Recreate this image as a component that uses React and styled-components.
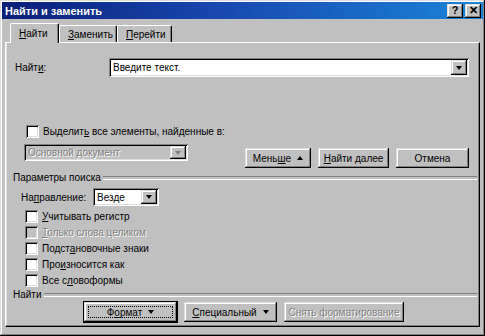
import React from 'react';
import styled, { createGlobalStyle, css } from 'styled-components';

const Global = createGlobalStyle`
  html, body { margin: 0; padding: 0; background: #c0c0c0; }
  body {
    font-family: "Liberation Sans", Arial, sans-serif;
    font-size: 10px;
    color: #000;
    white-space: nowrap;
  }
  * { box-sizing: border-box; }
`;

const raised = css`
  box-shadow: inset -1px -1px #000, inset 1px 1px #dfdfdf,
    inset -2px -2px #808080, inset 2px 2px #fff;
`;

const sunken = css`
  box-shadow: inset 1px 1px #808080, inset -1px -1px #fff,
    inset 2px 2px #000, inset -2px -2px #dfdfdf;
`;

const Window = styled.div`
  width: 485px;
  height: 336px;
  padding: 2px;
  background: #c0c0c0;
  display: flex;
  flex-direction: column;
  ${raised}
`;

const TitleBar = styled.div`
  height: 18px;
  display: flex;
  align-items: center;
  padding-left: 3px;
  background: linear-gradient(90deg, #0a1f78 0%, #1848b0 45%, #1a84d8 100%);
`;

const Title = styled.div`
  flex: 1;
  color: #fff;
  font-weight: bold;
  font-size: 11px;
`;

const TitleButton = styled.div`
  width: 16px;
  height: 14px;
  margin-right: ${p => p.$gap}px;
  background: #c0c0c0;
  display: flex;
  align-items: center;
  justify-content: center;
  font-weight: bold;
  font-size: 11px;
  line-height: 1;
  ${raised}
`;

const Body = styled.div`
  flex: 1;
  display: flex;
  flex-direction: column;
  padding: 4px 3px 7px 3px;
`;

const TabRow = styled.div`
  height: 19px;
  display: flex;
  align-items: flex-end;
  padding-left: 5px;
`;

const Tab = styled.div`
  position: relative;
  width: ${p => p.$w}px;
  height: ${p => (p.$active ? 20 : 17)}px;
  margin-bottom: ${p => (p.$active ? -1 : 0)}px;
  z-index: ${p => (p.$active ? 2 : 1)};
  padding-left: 8px;
  display: flex;
  align-items: center;
  background: #c0c0c0;
  border-top: 1px solid #fff;
  border-left: 1px solid #fff;
  border-right: 1px solid #000;
  border-top-left-radius: 2px;
  border-top-right-radius: 2px;
  box-shadow: inset -1px 0 #808080;
`;

const Panel = styled.div`
  flex: 1;
  display: flex;
  flex-direction: column;
  padding: 15px 10px 4px 7px;
  border-top: 1px solid #fff;
  border-left: 1px solid #fff;
  border-right: 1px solid #000;
  border-bottom: 1px solid #000;
  box-shadow: inset -1px -1px #808080, inset 1px 0 #dfdfdf;
`;

const FindRow = styled.div`
  display: flex;
  align-items: center;
  height: 19px;
`;

const Label = styled.span`
  width: ${p => p.$w}px;
  margin-left: ${p => p.$ml || 0}px;
  flex-shrink: 0;
`;

const Combo = styled.div`
  position: relative;
  flex: ${p => (p.$w ? 'none' : 1)};
  width: ${p => (p.$w ? `${p.$w}px` : 'auto')};
  height: ${p => p.$h}px;
  display: flex;
  align-items: center;
  padding: 0 2px 0 4px;
  background: ${p => (p.$disabled ? '#c0c0c0' : '#fff')};
  ${sunken}
`;

const ComboText = styled.span`
  flex: 1;
  color: ${p => (p.$disabled ? '#808080' : '#000')};
  text-shadow: ${p => (p.$disabled ? '1px 1px #fff' : 'none')};
`;

const ArrowButton = styled.div`
  width: 16px;
  height: ${p => p.$h}px;
  background: #c0c0c0;
  display: flex;
  align-items: center;
  justify-content: center;
  ${raised}
`;

const Triangle = styled.span`
  width: 0;
  height: 0;
  border-left: 3.5px solid transparent;
  border-right: 3.5px solid transparent;
  ${p =>
    p.$up
      ? css`border-bottom: 4px solid ${p.$color || '#000'};`
      : css`border-top: 4px solid ${p.$color || '#000'};`}
  margin-left: ${p => p.$ml || 0}px;
`;

const ScopeBlock = styled.div`
  margin-top: 48px;
  display: flex;
  justify-content: space-between;
  align-items: flex-end;
`;

const ScopeColumn = styled.div`
  margin-left: 11px;
  margin-bottom: 7px;
  display: flex;
  flex-direction: column;
  gap: 6px;
`;

const CheckRow = styled.div`
  display: flex;
  align-items: center;
  height: ${p => p.$h || 16}px;
  margin-left: ${p => p.$ml || 0}px;
  color: ${p => (p.$disabled ? '#808080' : '#000')};
  text-shadow: ${p => (p.$disabled ? '1px 1px #fff' : 'none')};
`;

const Box = styled.span`
  width: 13px;
  height: 13px;
  margin-right: 4px;
  flex-shrink: 0;
  background: ${p => (p.$disabled ? '#c0c0c0' : '#fff')};
  ${sunken}
`;

const ButtonRow = styled.div`
  display: flex;
  gap: 7px;
  margin-left: ${p => p.$ml || 0}px;
  margin-top: ${p => p.$mt || 0}px;
`;

const Button = styled.div`
  position: relative;
  width: ${p => p.$w}px;
  height: ${p => p.$h || 20}px;
  display: flex;
  align-items: center;
  justify-content: center;
  background: #c0c0c0;
  color: ${p => (p.$disabled ? '#808080' : '#000')};
  text-shadow: ${p => (p.$disabled ? '1px 1px #fff' : 'none')};
  ${raised}
  ${p =>
    p.$focused &&
    css`
      outline: 1px solid #000;
      &::after {
        content: '';
        position: absolute;
        inset: 4px;
        border: 1px dotted #000;
      }
    `}
`;

const GroupHeader = styled.div`
  display: flex;
  align-items: center;
  height: 11px;
  margin-top: ${p => p.$mt}px;
  margin-right: -8px;
  &::after {
    content: '';
    flex: 1;
    margin-left: 2px;
    height: 2px;
    border-top: 1px solid #808080;
    border-bottom: 1px solid #fff;
  }
`;

const DirectionRow = styled.div`
  display: flex;
  align-items: center;
  height: 18px;
  margin-top: 5px;
`;

const CheckList = styled.div`
  display: flex;
  flex-direction: column;
  margin: 2px 0 0 12px;
`;

const options = [
  { pre: '', key: 'У', post: 'читывать регистр' },
  { pre: '', key: 'Т', post: 'олько слова целиком', disabled: true },
  { pre: 'Подст', key: 'а', post: 'новочные знаки' },
  { pre: 'Про', key: 'и', post: 'зносится как' },
  { pre: 'Все с', key: 'л', post: 'овоформы' },
];

const App = () => (
  <>
    <Global />
    <Window>
      <TitleBar>
        <Title>Найти и заменить</Title>
        <TitleButton $gap={2}>?</TitleButton>
        <TitleButton $gap={2}>✕</TitleButton>
      </TitleBar>
      <Body>
        <TabRow>
          <Tab $w={49} $active><span><u>Н</u>айти</span></Tab>
          <Tab $w={58}><span><u>З</u>аменить</span></Tab>
          <Tab $w={55}><span><u>П</u>ерейти</span></Tab>
        </TabRow>
        <Panel>
          <FindRow>
            <Label $w={94} $ml={2}>Найт<u>и</u>:</Label>
            <Combo $h={19}>
              <ComboText>Введите текст.</ComboText>
              <ArrowButton $h={15}><Triangle /></ArrowButton>
            </Combo>
          </FindRow>

          <ScopeBlock>
            <ScopeColumn>
              <CheckRow $h={13} $ml={2}>
                <Box />
                <span>Выделит<u>ь</u> все элементы, найденные в:</span>
              </CheckRow>
              <Combo $w={164} $h={17} $disabled>
                <ComboText $disabled>Основной документ</ComboText>
                <ArrowButton $h={13}><Triangle $color="#808080" /></ArrowButton>
              </Combo>
            </ScopeColumn>
            <ButtonRow>
              <Button $w={66}>Мень<u>ш</u>е<Triangle $up $ml={6} /></Button>
              <Button $w={71}><u>Н</u>айти далее</Button>
              <Button $w={73}>Отмена</Button>
            </ButtonRow>
          </ScopeBlock>

          <GroupHeader $mt={4}>Параметры поиска</GroupHeader>
          <DirectionRow>
            <Label $w={72} $ml={8}>На<u>п</u>равление:</Label>
            <Combo $w={66} $h={18}>
              <ComboText>Везде</ComboText>
              <ArrowButton $h={14}><Triangle /></ArrowButton>
            </Combo>
          </DirectionRow>
          <CheckList>
            {options.map(o => (
              <CheckRow key={o.post} $disabled={o.disabled}>
                <Box $disabled={o.disabled} />
                <span>{o.pre}<u>{o.key}</u>{o.post}</span>
              </CheckRow>
            ))}
          </CheckList>

          <GroupHeader $mt={1}>Найти</GroupHeader>
          <ButtonRow $ml={71} $mt={2}>
            <Button $w={93} $focused>Ф<u>о</u>рмат<Triangle $ml={6} /></Button>
            <Button $w={93}><u>С</u>пециальный<Triangle $ml={6} /></Button>
            <Button $w={120} $disabled>Снять форматирование</Button>
          </ButtonRow>
        </Panel>
      </Body>
    </Window>
  </>
);

export default App;
